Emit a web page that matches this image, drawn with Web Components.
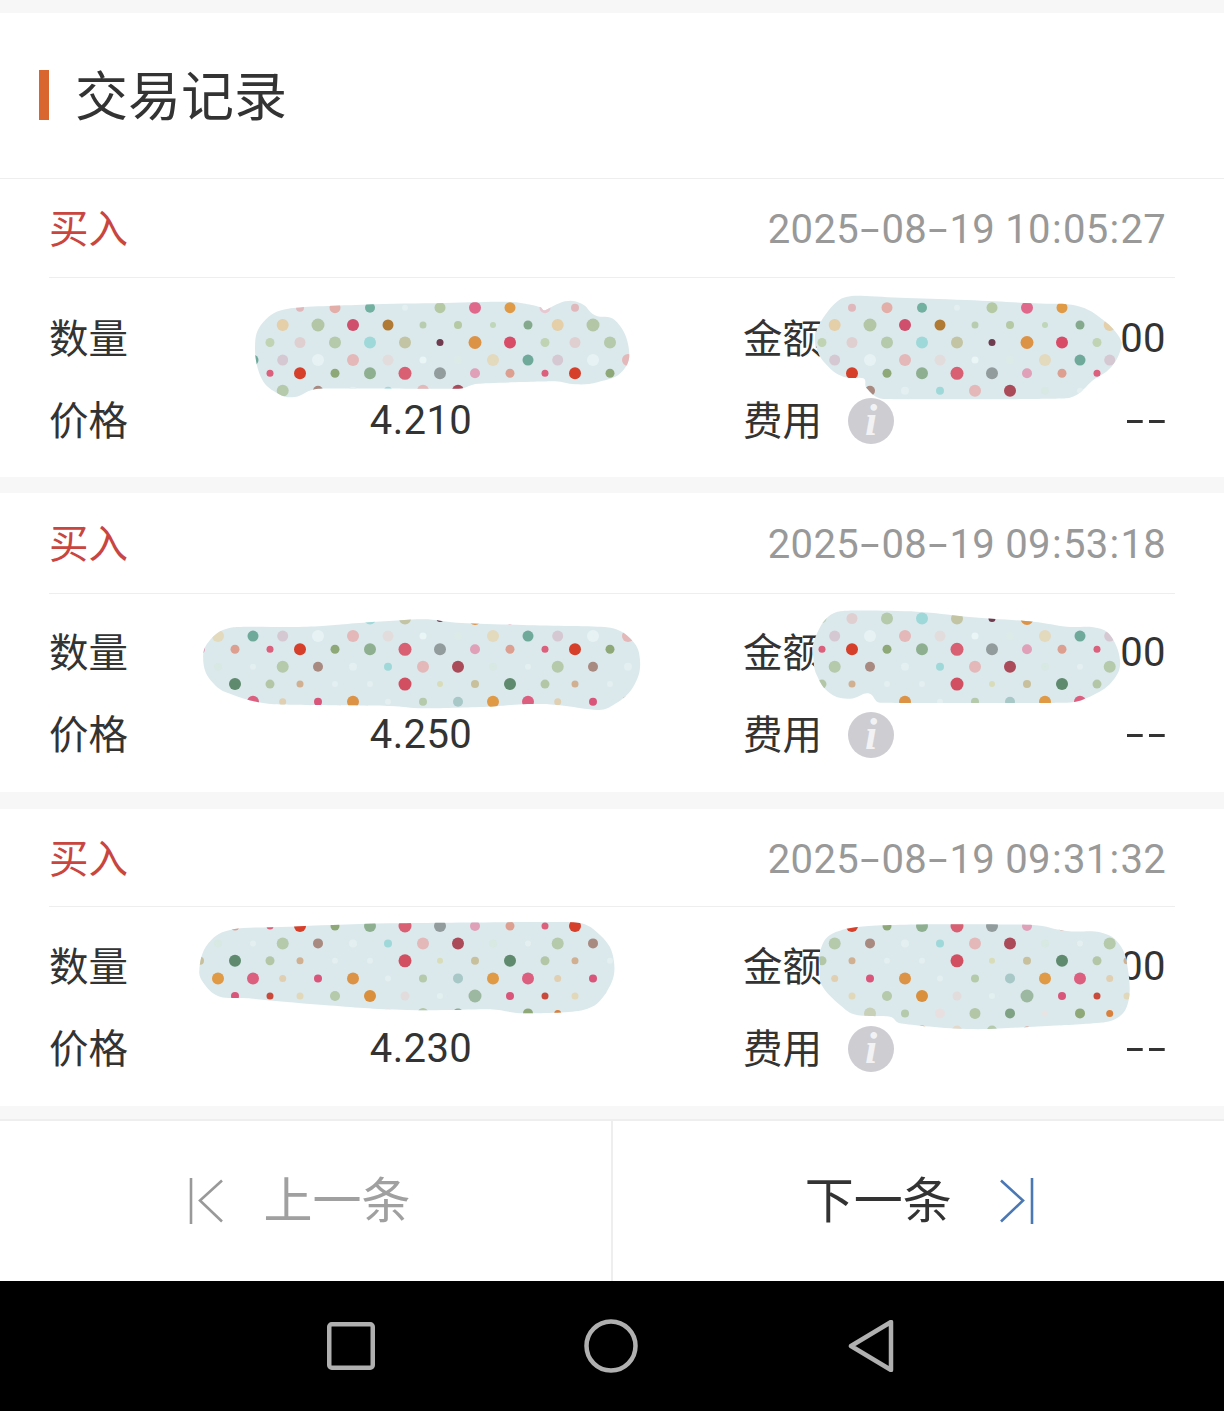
<!DOCTYPE html>
<html lang="zh-CN">
<head>
<meta charset="utf-8">
<title>交易记录</title>
<style>
    html,body{margin:0;padding:0;background:#f7f7f7;}
    body{
        position:relative;
        width:1224px;
        height:1411px;
        overflow:hidden;
        color:#333;
        font-family:Roboto,"Noto Sans CJK SC",sans-serif;
    }
    .dash{display:inline-block;letter-spacing:2.3px;transform:scaleX(1.65);transform-origin:right center;margin-right:-4px;}
</style>
</head>
<body>
<section-title>交易记录</section-title>

<trade-card time="2025-08-19 10:05:27" head="98" pad="19" after="16">
    <trade-field label="数量" align="center"></trade-field>
    <trade-field label="金额" align="end">00</trade-field>
    <trade-field label="价格" align="center">4.210</trade-field>
    <trade-field label="费用" align="end"><info-badge slot="hint"></info-badge><span class="dash">--</span></trade-field>
</trade-card>
<trade-card time="2025-08-19 09:53:18" head="100" pad="17.5" after="17">
    <trade-field label="数量" align="center"></trade-field>
    <trade-field label="金额" align="end">00</trade-field>
    <trade-field label="价格" align="center">4.250</trade-field>
    <trade-field label="费用" align="end"><info-badge slot="hint"></info-badge><span class="dash">--</span></trade-field>
</trade-card>
<trade-card time="2025-08-19 09:31:32" head="97" pad="18" after="13">
    <trade-field label="数量" align="center"></trade-field>
    <trade-field label="金额" align="end">00</trade-field>
    <trade-field label="价格" align="center">4.230</trade-field>
    <trade-field label="费用" align="end"><info-badge slot="hint"></info-badge><span class="dash">--</span></trade-field>
</trade-card>

<pager-bar></pager-bar>
<nav-bar></nav-bar>

<dot-smear name="a1"></dot-smear>
<dot-smear name="a2"></dot-smear>
<dot-smear name="b1"></dot-smear>
<dot-smear name="b2"></dot-smear>
<dot-smear name="c1"></dot-smear>
<dot-smear name="c2"></dot-smear>

<script>
class SectionTitle extends HTMLElement{
    constructor(){
        super()
        this.attachShadow({mode: 'open'})
        this.shadowRoot.innerHTML = `
            <style>
                :host{
                    display:flex;
                    align-items:center;
                    box-sizing:border-box;
                    height:166px;
                    margin-top:13px;
                    padding:0 0 1px 39px;
                    background:#fff;
                    border-bottom:1px solid #eee;
                }
                .bar{width:10px;height:50px;background:#d9652f;}
                h1{margin:6px 0 0 26px;font-size:53px;line-height:60px;font-weight:400;color:#333;}
            </style>
            <div class="bar"></div>
            <h1><slot></slot></h1>
        `
    }
}

class TradeCard extends HTMLElement{
    constructor(){
        super()
        this.attachShadow({mode: 'open'})
    }
    connectedCallback(){
        const head = this.getAttribute('head')
        const pad = this.getAttribute('pad')
        const after = this.getAttribute('after')
        const time = this.getAttribute('time')
            .replace(/-/g,'<span class="h">-</span>')
            .replace(/:/g,'<span class="c">:</span>')
        this.shadowRoot.innerHTML = `
            <style>
                :host{display:block;background:#fff;margin-bottom:${after}px;}
                .head{
                    display:flex;
                    justify-content:space-between;
                    align-items:center;
                    height:${head}px;
                    padding:0 58px 0 50px;
                }
                .side{font-size:39.5px;color:#c8463f;margin:-5px 0 0 -1px;}
                .time{font-size:40px;color:#999;letter-spacing:.3px;margin-top:3px;}
                .h{display:inline-block;width:22.5px;text-align:center;transform:scaleX(1.75);}
                .c{padding:0 1px;}
                .line{height:1px;margin:0 49px;background:#eee;}
                .body{
                    display:grid;
                    grid-template-columns:664px 1fr;
                    column-gap:30px;
                    grid-auto-rows:82.5px;
                    padding:${pad}px 58px 0 50px;
                    height:${198.5 - pad}px;
                }
            </style>
            <div class="head"><span class="side">买入</span><span class="time">${time}</span></div>
            <div class="line"></div>
            <div class="body"><slot></slot></div>
        `
    }
}

class TradeField extends HTMLElement{
    constructor(){
        super()
        this.attachShadow({mode: 'open'})
    }
    connectedCallback(){
        const align = this.getAttribute('align') === 'center' ? 'center' : 'right'
        this.shadowRoot.innerHTML = `
            <style>
                :host{display:flex;align-items:center;min-width:0;font-size:40px;color:#333;}
                .label{font-size:39.5px;white-space:nowrap;margin:-6px 0 0 -1px;}
                .value{flex:1;text-align:${align};letter-spacing:.4px;}
            </style>
            <span class="label">${this.getAttribute('label')}</span>
            <slot name="hint"></slot>
            <span class="value"><slot></slot></span>
        `
    }
}

class InfoBadge extends HTMLElement{
    constructor(){
        super()
        this.attachShadow({mode: 'open'})
        this.shadowRoot.innerHTML = `
            <style>
                :host{
                    display:flex;
                    align-items:center;
                    justify-content:center;
                    width:46px;
                    height:46px;
                    margin-left:26px;
                    border-radius:50%;
                    background:#cdcdd2;
                    color:#f2f2f4;
                    font:italic 700 44px/46px "Liberation Serif",serif;
                }
            </style>
            i
        `
    }
}

class PagerBar extends HTMLElement{
    constructor(){
        super()
        this.attachShadow({mode: 'open'})
        this.shadowRoot.innerHTML = `
            <style>
                :host{
                    display:grid;
                    grid-template-columns:613px 1fr;
                    height:160px;
                    background:#fff;
                    border-top:2px solid #eee;
                    font-size:49px;
                }
                .cell{box-sizing:border-box;display:flex;align-items:center;justify-content:center;}
                .cell span{margin-top:-8px;}
                .prev{color:#a0a0a0;gap:40px;padding-right:11px;border-right:2px solid #eee;}
                .next{color:#333;gap:48px;padding-left:1.5px;}
                svg{display:block;}
            </style>
            <div class="cell prev">
                <svg width="34" height="46" viewBox="0 0 34 46" fill="none" stroke="#999" stroke-width="2.6">
                    <path d="M2 0V46"/>
                    <path d="M33 3L11 23L33 44" transform="translate(0 -.5)"/>
                </svg>
                <span>上一条</span>
            </div>
            <div class="cell next">
                <span>下一条</span>
                <svg width="34" height="46" viewBox="0 0 34 46" fill="none" stroke="#4a78b5" stroke-width="2.6">
                    <path d="M1 2.5L23 22.5L1 43.5"/>
                    <path d="M32 0V46"/>
                </svg>
            </div>
        `
    }
}

class NavBar extends HTMLElement{
    constructor(){
        super()
        this.attachShadow({mode: 'open'})
        this.shadowRoot.innerHTML = `
            <style>
                :host{display:flex;justify-content:center;align-items:center;height:130px;background:#000;padding-right:2px;}
                .key{width:260px;display:flex;justify-content:center;}
                svg{display:block;}
            </style>
            <div class="key">
                <svg width="48" height="48" viewBox="0 0 48 48" fill="none" stroke="#b0b0b0" stroke-width="4.5">
                    <rect x="2.25" y="2.25" width="43.5" height="43.5" rx="2.5"/>
                </svg>
            </div>
            <div class="key">
                <svg width="54" height="54" viewBox="0 0 54 54" fill="none" stroke="#b0b0b0" stroke-width="4.5">
                    <circle cx="27" cy="27" r="24.5"/>
                </svg>
            </div>
            <div class="key">
                <svg width="46" height="52" viewBox="0 0 46 52" fill="none" stroke="#b0b0b0" stroke-width="4.5" stroke-linejoin="round">
                    <path d="M3 26L43 2V50Z"/>
                </svg>
            </div>
        `
    }
}

// the same dotted tile sits under every scribble, rows top to bottom
const TILE_W = 275
const ROW_Y = [0,17.3,34.8,52.4,65.6,83,100.4,118,135.6,153,170.2]
const ODD_X = [5,35,70,105,140,175,210,245]
const EVEN_X = [17.7,53,88,123,158,193,228,263]
const ROWS = [
    'e8c8d0 5.5,e0b8bc 4,e4aea8 5.5,72b0a0 5,e3eff1 3,b5c9a5 5.5,e0688a 6,e09a45 5.5',
    'e4cfa8 6,b3c6a6 6.5,cf4f6c 6,b07a35 5.5,b8ccb0 3.5,b5c9a5 4,c0d6b8 3,84a98c 4.5',
    'c0d3b3 4.5,e0cfd0 5.5,b5c9ab 6,9fd8d8 6,c3c4a3 6,6f3b4e 3.5,dd9345 6.5,d94c68 6',
    'd5c8d2 5.5,e6f2f4 6,e4b8b8 6,e2dcdc 5.5,eaf5f6 3.5,dcebe8 4,e3d9bd 6,6ea99a 5.5',
    'dc5f7c 3.5,d63f2a 6,8fa878 4.5,8fb090 6,d95f72 6.5,929c9c 6,e0a0b8 5,dda090 4.5',
    'b5c9ab 6,a98a80 5,e3eff1 4,9fd8d8 4,e4b8b8 6,ab4a58 6,d8e8e2 4,e3eff1 3',
    'b3c6a6 4.5,d0b090 3.5,e3eff1 3,e3eff1 3,d14f60 6.5,d8dcb8 3,c8c09c 4,5f8a6e 6',
    'e0cfb0 3.5,d9567a 4,dd9345 6,e3eff1 3,b5c9ab 4,a8c8c8 5,e09a45 6,dd5f80 6',
    'c94a3a 3.5,e0d8b8 3.5,b5c9ab 5,d98f3c 6,e2dcdc 4.5,e3f0f0 3,9db8a0 6.5,d9567a 4',
    'd9803c 3.5,c8d0b8 6,b5c9ab 4,e8e0e0 5,b3c6a6 5.5,7fa284 5,e8e4e4 3,8fa878 5',
    'c94a3a 3,e0d8b8 3,b5c9ab 4,e09a45 5,e4d8c8 5,b5c9ab 5,dd8a70 4,e4b8b8 5'
]
// outline points are in 3x crop units, from the crop origin ox,oy
const SMEARS = {
    a1:{ox:245,oy:292,tx:265,ty:307.7,pts:[30,165,55,90,130,50,350,38,600,33,800,30,885,45,900,55,960,28,1010,35,1050,70,1110,85,1150,160,1135,235,1060,270,990,277,930,268,700,275,640,290,220,290,150,315,100,305,50,260]},
    a2:{ox:800,oy:285,tx:817,ty:307.7,pts:[50,135,100,60,155,33,300,38,500,45,700,55,830,62,910,105,960,160,960,200,930,250,880,285,800,340,250,342,200,310,190,280,130,275,80,240,50,190]},
    b1:{ox:190,oy:610,tx:265,ty:583.7,pts:[40,155,60,90,130,52,350,50,520,38,700,28,800,38,1000,45,1250,52,1320,85,1350,150,1330,230,1270,285,1220,300,1100,285,1000,283,900,290,700,295,600,288,250,283,130,255,70,220]},
    b2:{ox:800,oy:600,tx:817,ty:583.7,pts:[40,130,75,60,130,33,350,35,500,50,700,65,800,80,880,82,930,105,960,180,940,240,880,285,800,308,240,308,205,280,150,296,90,280,50,225,40,170]},
    c1:{ox:190,oy:915,tx:265,ty:860.4,pts:[28,165,55,85,130,43,300,35,600,25,1150,22,1230,60,1272,140,1250,230,1180,285,1000,295,900,283,650,285,400,270,170,250,90,245,45,210]},
    c2:{ox:800,oy:915,tx:817,ty:860.4,pts:[60,110,90,60,180,35,400,28,700,30,800,48,900,52,960,90,985,170,985,260,950,310,880,325,700,335,500,342,300,325,270,305,170,300,120,270,65,210,60,150]}
}

class DotSmear extends HTMLElement{
    constructor(){
        super()
        this.attachShadow({mode: 'open'})
    }
    // smooth closed curve through the outline; handles follow the shorter neighbour so long edges stay flat
    outline(p){
        const n = p.length
        const dist = (u,v) => Math.hypot(u[0]-v[0],u[1]-v[1])
        const tangent = (u,v) => {
            const l = dist(u,v) || 1
            return [(v[0]-u[0])/l,(v[1]-u[1])/l]
        }
        let d = `M${p[0][0]} ${p[0][1]}`
        for(let i = 0; i < n; i++){
            const a = p[(i+n-1)%n], b = p[i], c = p[(i+1)%n], e = p[(i+2)%n]
            const t1 = tangent(a,c), t2 = tangent(b,e)
            const l1 = Math.min(dist(a,b),dist(b,c))*.42
            const l2 = Math.min(dist(b,c),dist(c,e))*.42
            d += `C${(b[0]+t1[0]*l1).toFixed(1)} ${(b[1]+t1[1]*l1).toFixed(1)} ${(c[0]-t2[0]*l2).toFixed(1)} ${(c[1]-t2[1]*l2).toFixed(1)} ${c[0].toFixed(1)} ${c[1].toFixed(1)}`
        }
        return d+'Z'
    }
    dots(s){
        let out = ''
        ROWS.forEach((row,r)=>{
            const xs = r % 2 ? EVEN_X : ODD_X
            row.split(',').forEach((item,i)=>{
                const [color,size] = item.split(' ')
                for(let k = -1; k < 3; k++){
                    const cx = s.tx + TILE_W*k + xs[i]
                    out += `<circle cx="${cx}" cy="${s.ty+ROW_Y[r]}" r="${size}" fill="#${color}"/>`
                }
            })
        })
        return out
    }
    connectedCallback(){
        const s = SMEARS[this.getAttribute('name')]
        const pts = []
        for(let i = 0; i < s.pts.length; i += 2){
            pts.push([s.ox+s.pts[i]/3, s.oy+s.pts[i+1]/3])
        }
        const d = this.outline(pts)
        this.shadowRoot.innerHTML = `
            <style>
                :host{position:absolute;left:0;top:0;width:1224px;height:1411px;pointer-events:none;}
                svg{display:block;}
                .dots{filter:blur(.4px);}
            </style>
            <svg width="1224" height="1411" viewBox="0 0 1224 1411">
                <clipPath id="blob"><path d="${d}"/></clipPath>
                <path d="${d}" fill="#dbe9ed"/>
                <g clip-path="url(#blob)"><g class="dots">${this.dots(s)}</g></g>
            </svg>
        `
    }
}

customElements.define('section-title', SectionTitle)
customElements.define('trade-card', TradeCard)
customElements.define('trade-field', TradeField)
customElements.define('info-badge', InfoBadge)
customElements.define('pager-bar', PagerBar)
customElements.define('nav-bar', NavBar)
customElements.define('dot-smear', DotSmear)
</script>
</body>
</html>
